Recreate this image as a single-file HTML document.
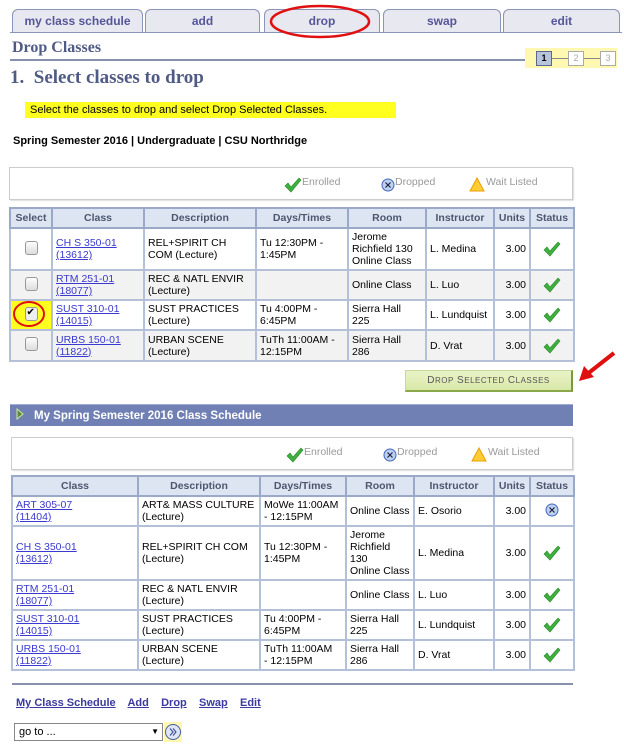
<!DOCTYPE html>
<html><head><meta charset="utf-8"><style>
*{margin:0;padding:0;box-sizing:border-box}
body{width:624px;height:746px;background:#fff;position:relative;font-family:"Liberation Sans",sans-serif;font-size:10.5px;color:#000;overflow:hidden}
.a{position:absolute}
.tab{position:absolute;top:9px;height:24px;border:1px solid #8a93b8;border-bottom:none;border-radius:6px 6px 0 0;background:#e8e8f0;color:#55559a;font-weight:bold;font-size:12px;text-align:center;line-height:23px}
.ser{font-family:"Liberation Serif",serif;font-weight:bold;color:#4f5b85}
table{position:absolute;border-collapse:collapse;table-layout:fixed}
td,th{border:2px solid #b4c0d8;padding:1px 3px;vertical-align:middle;line-height:12px;font-size:10.5px}
th{background:#dde5f2;color:#4d566e;font-weight:bold;text-align:center;height:20px;border-color:#9aa9c8}
tr.g td{background:#f2f2f2}
a{color:#3a3ad0;text-decoration:underline}
.u{text-align:right}
.c{text-align:center}
.cb{display:inline-block;width:13px;height:14px;border:1px solid #999;border-radius:3px;background:linear-gradient(#fdfdfd,#ddd)}
.leg{position:absolute;border:1px solid #ccc;box-shadow:1px 1px 1px #ddd;color:#999;font-size:10.5px}
.ck{display:block;margin:0 auto}
</style></head><body>
<svg width="0" height="0" style="position:absolute"><defs><symbol id="ck" viewBox="0 0 18 16"><path d="M1 9 L4 6 L7 10 L15 1 L17 3 L7 15 Z" fill="#3db03d" stroke="#2a8a2a" stroke-width=".6"/></symbol></defs></svg>
<div class="tab" style="left:12px;width:131px">my class schedule</div>
<div class="tab" style="left:145px;width:115px">add</div>
<div class="tab" style="left:264px;width:116px">drop</div>
<div class="tab" style="left:383px;width:118px">swap</div>
<div class="tab" style="left:503px;width:117px">edit</div>
<div class="a" style="left:10px;top:32px;width:612px;height:1px;background:#8a93b8"></div>
<svg class="a" style="left:268px;top:3px" width="104" height="37"><ellipse cx="52" cy="18.5" rx="49" ry="15.5" fill="none" stroke="#e01010" stroke-width="2.5"/></svg>
<div class="a ser" style="left:12px;top:39px;font-size:16px">Drop Classes</div>
<div class="a" style="left:10px;top:59px;width:516px;height:2px;background:#8890b0"></div>
<div class="a" style="left:525px;top:48px;width:92px;height:20px;background:#fff8b0"></div>
<div class="a" style="left:536px;top:51px;width:16px;height:15px;border:1px solid #5a6890;background:#b8c4dc;font-size:9px;text-align:center;line-height:13px;font-weight:bold">1</div>
<div class="a" style="left:552px;top:58px;width:16px;height:1px;background:#888"></div>
<div class="a" style="left:568px;top:51px;width:16px;height:15px;border:1px solid #aaa;background:#fff;font-size:9px;text-align:center;line-height:13px;color:#aaa">2</div>
<div class="a" style="left:584px;top:58px;width:16px;height:1px;background:#888"></div>
<div class="a" style="left:600px;top:51px;width:16px;height:15px;border:1px solid #aaa;background:#fff;font-size:9px;text-align:center;line-height:13px;color:#aaa">3</div>
<div class="a ser" style="left:10px;top:67px;font-size:19px">1.&nbsp; Select classes to drop</div>
<div class="a" style="left:25px;top:102px;width:371px;height:16px;background:#ffff20;font-size:11px;line-height:16px;padding-left:5px">Select the classes to drop and select Drop Selected Classes.</div>
<div class="a" style="left:13px;top:135px;font-size:11px;font-weight:bold">Spring Semester 2016 | Undergraduate | CSU Northridge</div>

<div class="leg" style="left:9px;top:167px;width:564px;height:33px">
<svg class="a" style="left:274px;top:9px" width="18" height="16"><use href="#ck"/></svg><span class="a" style="left:292px;top:8px">Enrolled</span>
<svg class="a" style="left:371px;top:10px" width="14" height="14"><circle cx="7" cy="7" r="6" fill="#bcd0f0" stroke="#4466bb"/><path d="M4.5 4.5L9.5 9.5M9.5 4.5L4.5 9.5" stroke="#224" stroke-width="1.2"/></svg><span class="a" style="left:385px;top:8px">Dropped</span>
<svg class="a" style="left:459px;top:9px" width="16" height="15"><path d="M8 1L15 14H1Z" fill="#ffcc33" stroke="#e8a000"/></svg><span class="a" style="left:476px;top:8px">Wait Listed</span>
</div>

<table style="left:9px;top:207px;width:564px">
<colgroup><col style="width:42px"><col style="width:92px"><col style="width:112px"><col style="width:92px"><col style="width:78px"><col style="width:68px"><col style="width:36px"><col style="width:44px"></colgroup>
<tr><th>Select</th><th>Class</th><th>Description</th><th>Days/Times</th><th>Room</th><th>Instructor</th><th>Units</th><th>Status</th></tr>
<tr style="height:42px"><td class="c"><span class="cb"></span></td><td><a>CH S 350-01<br>(13612)</a></td><td>REL+SPIRIT CH<br>COM (Lecture)</td><td>Tu 12:30PM -<br>1:45PM</td><td>Jerome<br>Richfield 130<br>Online Class</td><td>L. Medina</td><td class="u">3.00</td><td><svg class="ck" width="18" height="16"><use href="#ck"/></svg></td></tr>
<tr class="g" style="height:30px"><td class="c"><span class="cb"></span></td><td><a>RTM 251-01<br>(18077)</a></td><td>REC &amp; NATL ENVIR<br>(Lecture)</td><td></td><td>Online Class</td><td>L. Luo</td><td class="u">3.00</td><td><svg class="ck" width="18" height="16"><use href="#ck"/></svg></td></tr>
<tr style="height:30px"><td class="c" style="background:#ffff20"><span class="cb" style="background:#eee;position:relative"><span style="position:absolute;left:1px;top:-1px;font-size:10px">✔</span></span></td><td><a>SUST 310-01<br>(14015)</a></td><td>SUST PRACTICES<br>(Lecture)</td><td>Tu 4:00PM -<br>6:45PM</td><td>Sierra Hall<br>225</td><td>L. Lundquist</td><td class="u">3.00</td><td><svg class="ck" width="18" height="16"><use href="#ck"/></svg></td></tr>
<tr class="g" style="height:31px"><td class="c"><span class="cb"></span></td><td><a>URBS 150-01<br>(11822)</a></td><td>URBAN SCENE<br>(Lecture)</td><td>TuTh 11:00AM -<br>12:15PM</td><td>Sierra Hall<br>286</td><td>D. Vrat</td><td class="u">3.00</td><td><svg class="ck" width="18" height="16"><use href="#ck"/></svg></td></tr>
</table>
<svg class="a" style="left:12px;top:300px" width="34" height="28"><ellipse cx="17" cy="14" rx="15" ry="12" fill="none" stroke="#e01010" stroke-width="2"/></svg>

<div class="a" style="left:405px;top:370px;width:168px;height:22px;background:linear-gradient(#eaf3c8,#d8e8a8);border:1px solid #c8d898;border-right:2px solid #7a9a3a;border-bottom:2px solid #8aa84a;color:#555;font-size:10px;text-align:center;line-height:20px;letter-spacing:.5px">D<span style="font-size:8px">ROP</span> S<span style="font-size:8px">ELECTED</span> C<span style="font-size:8px">LASSES</span></div>
<svg class="a" style="left:576px;top:350px" width="42" height="34"><path d="M38 3 L10 25" stroke="#e01010" stroke-width="4"/><path d="M3 31 L8 16 L18 27Z" fill="#e01010"/></svg>

<div class="a" style="left:10px;top:404px;width:563px;height:22px;background:#7080b4;border-top:1px solid #a0acd0;color:#fff;font-weight:bold;font-size:11.5px;line-height:22px;padding-left:24px">My Spring Semester 2016 Class Schedule</div>
<svg class="a" style="left:16px;top:408px" width="8" height="12"><path d="M1 1L7 6L1 11Z" fill="#5a8a3a" stroke="#cfe8a0"/></svg>

<div class="leg" style="left:11px;top:437px;width:562px;height:33px">
<svg class="a" style="left:274px;top:9px" width="18" height="16"><use href="#ck"/></svg><span class="a" style="left:292px;top:8px">Enrolled</span>
<svg class="a" style="left:371px;top:10px" width="14" height="14"><circle cx="7" cy="7" r="6" fill="#bcd0f0" stroke="#4466bb"/><path d="M4.5 4.5L9.5 9.5M9.5 4.5L4.5 9.5" stroke="#224" stroke-width="1.2"/></svg><span class="a" style="left:385px;top:8px">Dropped</span>
<svg class="a" style="left:459px;top:9px" width="16" height="15"><path d="M8 1L15 14H1Z" fill="#ffcc33" stroke="#e8a000"/></svg><span class="a" style="left:476px;top:8px">Wait Listed</span>
</div>

<table style="left:11px;top:475px;width:562px">
<colgroup><col style="width:126px"><col style="width:122px"><col style="width:86px"><col style="width:68px"><col style="width:80px"><col style="width:36px"><col style="width:44px"></colgroup>
<tr><th>Class</th><th>Description</th><th>Days/Times</th><th>Room</th><th>Instructor</th><th>Units</th><th>Status</th></tr>
<tr style="height:30px"><td><a>ART 305-07<br>(11404)</a></td><td>ART&amp; MASS CULTURE<br>(Lecture)</td><td>MoWe 11:00AM<br>- 12:15PM</td><td>Online Class</td><td>E. Osorio</td><td class="u">3.00</td><td class="c"><svg width="14" height="14"><circle cx="7" cy="7" r="6" fill="#bcd0f0" stroke="#4466bb"/><path d="M4.5 4.5L9.5 9.5M9.5 4.5L4.5 9.5" stroke="#224" stroke-width="1.2"/></svg></td></tr>
<tr style="height:54px"><td><a>CH S 350-01<br>(13612)</a></td><td>REL+SPIRIT CH COM<br>(Lecture)</td><td>Tu 12:30PM -<br>1:45PM</td><td>Jerome<br>Richfield<br>130<br>Online Class</td><td>L. Medina</td><td class="u">3.00</td><td><svg class="ck" width="18" height="16"><use href="#ck"/></svg></td></tr>
<tr style="height:30px"><td><a>RTM 251-01<br>(18077)</a></td><td>REC &amp; NATL ENVIR<br>(Lecture)</td><td></td><td>Online Class</td><td>L. Luo</td><td class="u">3.00</td><td><svg class="ck" width="18" height="16"><use href="#ck"/></svg></td></tr>
<tr style="height:30px"><td><a>SUST 310-01<br>(14015)</a></td><td>SUST PRACTICES<br>(Lecture)</td><td>Tu 4:00PM -<br>6:45PM</td><td>Sierra Hall<br>225</td><td>L. Lundquist</td><td class="u">3.00</td><td><svg class="ck" width="18" height="16"><use href="#ck"/></svg></td></tr>
<tr style="height:30px"><td><a>URBS 150-01<br>(11822)</a></td><td>URBAN SCENE<br>(Lecture)</td><td>TuTh 11:00AM<br>- 12:15PM</td><td>Sierra Hall<br>286</td><td>D. Vrat</td><td class="u">3.00</td><td><svg class="ck" width="18" height="16"><use href="#ck"/></svg></td></tr>
</table>

<div class="a" style="left:12px;top:683px;width:561px;height:2px;background:#8890b0"></div>
<div class="a" style="left:16px;top:697px;font-size:11px;font-weight:bold;color:#3a3aa0">
<a style="color:#3a3aa0">My Class Schedule</a>&nbsp;&nbsp;&nbsp; <a style="color:#3a3aa0">Add</a>&nbsp;&nbsp;&nbsp; <a style="color:#3a3aa0">Drop</a>&nbsp;&nbsp;&nbsp; <a style="color:#3a3aa0">Swap</a>&nbsp;&nbsp;&nbsp; <a style="color:#3a3aa0">Edit</a></div>
<div class="a" style="left:14px;top:723px;width:149px;height:18px;border:1px solid #888;font-size:11px;line-height:16px;padding-left:4px">go to ...<span style="position:absolute;right:3px;font-size:8px">▼</span></div>
<div class="a" style="left:164px;top:722px;width:18px;height:20px;background:#fff8b0"></div>
<svg class="a" style="left:164px;top:723px" width="18" height="18"><circle cx="9" cy="9" r="7.5" fill="#dde6f6" stroke="#4a5aa0"/><path d="M6 5.5L9 9L6 12.5M9 5.5L12 9L9 12.5" fill="none" stroke="#3a4a90" stroke-width="1.1"/></svg>
</body></html>
